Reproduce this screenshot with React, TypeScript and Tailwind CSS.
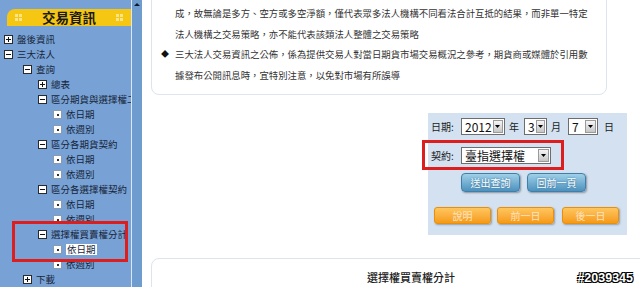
import React from 'react';

type Node = {
  label: string;
  level: number;
  icon: 'plus' | 'minus' | 'leaf';
  selected?: boolean;
};

const tree: Node[] = [
  { label: '盤後資訊', level: 0, icon: 'plus' },
  { label: '三大法人', level: 0, icon: 'minus' },
  { label: '查詢', level: 1, icon: 'minus' },
  { label: '總表', level: 2, icon: 'plus' },
  { label: '區分期貨與選擇權二類', level: 2, icon: 'minus' },
  { label: '依日期', level: 3, icon: 'leaf' },
  { label: '依週別', level: 3, icon: 'leaf' },
  { label: '區分各期貨契約', level: 2, icon: 'minus' },
  { label: '依日期', level: 3, icon: 'leaf' },
  { label: '依週別', level: 3, icon: 'leaf' },
  { label: '區分各選擇權契約', level: 2, icon: 'minus' },
  { label: '依日期', level: 3, icon: 'leaf' },
  { label: '依週別', level: 3, icon: 'leaf' },
  { label: '選擇權買賣權分計', level: 2, icon: 'minus' },
  { label: '依日期', level: 3, icon: 'leaf', selected: true },
  { label: '依週別', level: 3, icon: 'leaf' },
  { label: '下載', level: 1, icon: 'plus' },
];

const indent = ['pl-[4px]', 'pl-[23px]', 'pl-[38px]', 'pl-[53px]'];

const font = { fontFamily: '"Noto Sans CJK TC", "Noto Sans", sans-serif' };

const TreeIcon = ({ icon }: { icon: Node['icon'] }) => {
  if (icon === 'leaf') {
    return (
      <span className="flex h-[9px] w-[9px] shrink-0 items-center justify-center border border-[#8a9ab0] bg-white">
        <span className="h-[2px] w-[2px] bg-[#333]" />
      </span>
    );
  }
  return (
    <svg width="9" height="9" viewBox="0 0 9 9" className="shrink-0">
      <rect x="0.5" y="0.5" width="8" height="8" fill="#fff" stroke="#2a2a2a" />
      <line x1="2" y1="4.5" x2="7" y2="4.5" stroke="#111" />
      {icon === 'plus' && <line x1="4.5" y1="2" x2="4.5" y2="7" stroke="#111" />}
    </svg>
  );
};

const GridDots = () => (
  <span className="grid grid-cols-2 gap-[1px]">
    <span className="h-[3px] w-[3px] bg-[#fbe48a]" />
    <span className="h-[3px] w-[3px] bg-[#fbe48a]" />
    <span className="h-[3px] w-[3px] bg-[#fbe48a]" />
    <span className="h-[3px] w-[3px] bg-[#fbe48a]" />
  </span>
);

const Select = ({ value, width }: { value: string; width: string }) => (
  <div className={`flex h-[17px] items-stretch border border-[#6d6d6d] bg-white ${width}`}>
    <span
      className="flex-1 pl-[3px] text-[12px] leading-[15px] text-[#111]"
      style={{ fontFamily: '"Noto Sans CJK TC", "Liberation Sans", sans-serif' }}
    >
      {value}
    </span>
    <span className="m-[1px] flex w-[11px] items-center justify-center border border-[#9a9a9a] bg-gradient-to-b from-[#f6f6f6] to-[#c6c6c6]">
      <svg width="5" height="3" viewBox="0 0 5 3">
        <path d="M0 0 L5 0 L2.5 3 Z" fill="#000" />
      </svg>
    </span>
  </div>
);

const BlueButton = ({ label }: { label: string }) => (
  <button className="h-[19px] w-[59px] rounded-[4px] border border-[#3f7fa9] bg-gradient-to-b from-[#9fd0e8] to-[#4e92bd] text-[10px] leading-[17px] text-white shadow-[1px_1px_2px_rgba(0,0,0,0.35)] [text-shadow:0_0_2px_#2b6a94]">
    {label}
  </button>
);

const OrangeButton = ({ label }: { label: string }) => (
  <button className="h-[17px] w-[57px] rounded-[3px] border border-[#e6900e] bg-gradient-to-b from-[#ffc65c] to-[#f59a12] text-[10px] leading-[15px] text-[#fde3c2] shadow-[1px_1px_2px_rgba(0,0,0,0.3)]">
    {label}
  </button>
);

const Sidebar = () => (
  <div className="flex h-full w-[131px] shrink-0 flex-col bg-[#78a2d5] pt-[9px]" style={font}>
    <div className="ml-[7px] flex h-[24px] items-center justify-between rounded-tl-[8px] bg-[#f6c712] px-[8px]">
      <GridDots />
      <span className="text-[13.5px] font-bold leading-none text-[#1a1a1a]">交易資訊</span>
      <GridDots />
    </div>
    <div className="relative mt-[6px] flex flex-col">
      {tree.map((n, i) => (
        <div
          key={i}
          className={`flex h-[15px] items-center gap-[4px] overflow-hidden whitespace-nowrap ${indent[n.level]}`}
        >
          <TreeIcon icon={n.icon} />
          <span
            className={`text-[9.5px] leading-[11px] text-[#17253a] ${n.selected ? 'bg-white px-[1px]' : ''}`}
          >
            {n.label}
          </span>
        </div>
      ))}
      <div className="pointer-events-none absolute left-[12px] top-[189px] h-[41px] w-[116px] border-[3px] border-[#dc1e1e]" />
    </div>
  </div>
);

const Scrollbar = () => (
  <div className="flex h-full w-[11px] shrink-0 flex-col items-center border-l border-[#dbe7f5] bg-[#6f9ccf] pt-[3px]">
    <svg width="6" height="3" viewBox="0 0 6 3">
      <path d="M0 3 L6 3 L3 0 Z" fill="#0e1a2a" />
    </svg>
  </div>
);

const QueryPanel = () => (
  <div className="ml-[286px] mt-[18px] h-[122px] w-[199px] bg-[#d3e1f1] pl-[3px] pt-[5px] text-[10px] text-[#1a1a1a]" style={font}>
    <div className="flex h-[17px] items-center">
      <span className="w-[30px]">日期:</span>
      <Select value="2012" width="w-[44px]" />
      <span className="ml-[4px] mr-[5px]">年</span>
      <Select value="3" width="w-[23px]" />
      <span className="ml-[4px] mr-[7px]">月</span>
      <Select value="7" width="w-[30px]" />
      <span className="ml-[6px]">日</span>
    </div>
    <div className="relative mt-[13px] flex h-[15px] items-center">
      <span className="w-[30px]">契約:</span>
      <Select value="臺指選擇權" width="w-[90px]" />
      <div className="pointer-events-none absolute -left-[9px] -top-[8px] h-[30px] w-[142px] border-[3px] border-[#dc1e1e]" />
    </div>
    <div className="ml-[30px] mt-[10px] flex gap-[7px]">
      <BlueButton label="送出查詢" />
      <BlueButton label="回前一頁" />
    </div>
    <div className="ml-[3px] mt-[15px] flex gap-[6px]">
      <OrangeButton label="說明" />
      <OrangeButton label="前一日" />
      <span className="ml-[2px]">
        <OrangeButton label="後一日" />
      </span>
    </div>
  </div>
);

const App = () => {
  return (
    <div className="flex h-[287px] w-[640px] overflow-hidden bg-white">
      <Sidebar />
      <Scrollbar />
      <main className="relative flex-1 overflow-hidden" style={font}>
        <div className="-mt-[10px] ml-[9px] h-[105px] w-[456px] rounded-b-[8px] border border-[#dde4ee] pl-[9px] pt-[12px] text-[9.4px] leading-[20.7px] text-[#333]">
          <p className="pl-[14px]">成，故無論是多方、空方或多空淨額，僅代表眾多法人機構不同看法合計互抵的結果，而非單一特定</p>
          <p className="pl-[14px]">法人機構之交易策略，亦不能代表該類法人整體之交易策略</p>
          <p className="flex">
            <span className="w-[14px] text-[8px] text-[#111]">◆</span>
            <span>三大法人交易資訊之公佈，係為提供交易人對當日期貨市場交易概況之參考，期貨商或媒體於引用數</span>
          </p>
          <p className="pl-[14px]">據發布公開訊息時，宜特別注意，以免對市場有所誤導</p>
        </div>
        <QueryPanel />
        <div className="ml-[9px] mt-[23px] h-[60px] w-[520px] rounded-tl-[8px] border border-[#dde4ee] pt-[10px] text-center text-[11px] font-medium text-[#222]">
          選擇權買賣權分計
        </div>
        <span
          className="absolute -bottom-[1px] right-[7px] text-[12.5px] font-bold text-white [text-shadow:-1px_-1px_0_#000,1px_-1px_0_#000,-1px_1px_0_#000,1px_1px_0_#000]"
          style={{ fontFamily: '"Liberation Sans", sans-serif' }}
        >
          #2039345
        </span>
      </main>
    </div>
  );
};

export default App;
